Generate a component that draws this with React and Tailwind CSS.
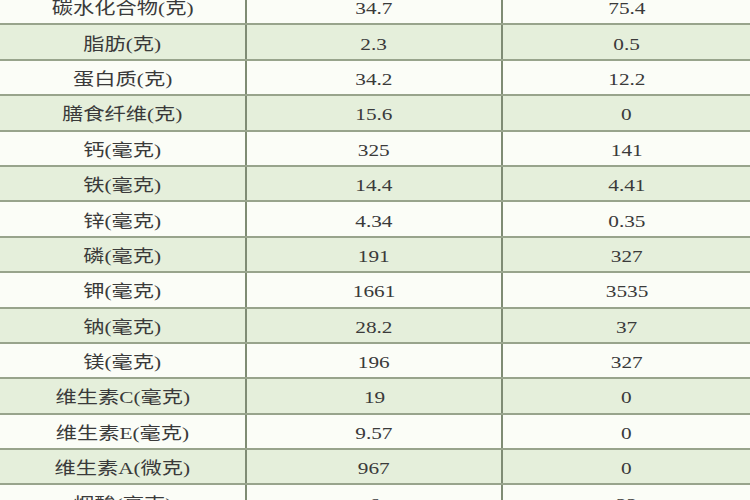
import React from 'react';

const rows = [
    ['碳水化合物(克)', '34.7', '75.4'],
    ['脂肪(克)', '2.3', '0.5'],
    ['蛋白质(克)', '34.2', '12.2'],
    ['膳食纤维(克)', '15.6', '0'],
    ['钙(毫克)', '325', '141'],
    ['铁(毫克)', '14.4', '4.41'],
    ['锌(毫克)', '4.34', '0.35'],
    ['磷(毫克)', '191', '327'],
    ['钾(毫克)', '1661', '3535'],
    ['钠(毫克)', '28.2', '37'],
    ['镁(毫克)', '196', '327'],
    ['维生素C(毫克)', '19', '0'],
    ['维生素E(毫克)', '9.57', '0'],
    ['维生素A(微克)', '967', '0'],
    ['烟酸(毫克)', '6', '22'],
];

const Cell = ({ text, last }) => (
    <div className={`flex items-center justify-center pt-[4px] ${last ? '' : 'border-r-2 border-[#7f8c74]'}`}>
        <span className="inline-block scale-x-[1.25] text-[17px] leading-none text-[#3a3a3a]">{text}</span>
    </div>
);

const App = () => {
    return (
        <div
            className="w-[750px] h-[500px] overflow-hidden bg-[#fbfdf7]"
            style={{ fontFamily: '"Liberation Serif", "Noto Sans CJK SC", serif' }}
        >
            <div className="-mt-[10px]">
                {rows.map((row, index) => (
                    <div
                        key={index}
                        className={`grid grid-cols-[247px_256px_1fr] h-[35.4px] border-b-2 border-[#98a48c] ${index % 2 === 1 ? 'bg-[#e5efdb]' : 'bg-[#fbfdf7]'}`}
                    >
                        <Cell text={row[0]} />
                        <Cell text={row[1]} />
                        <Cell text={row[2]} last />
                    </div>
                ))}
            </div>
        </div>
    );
};

export default App;
